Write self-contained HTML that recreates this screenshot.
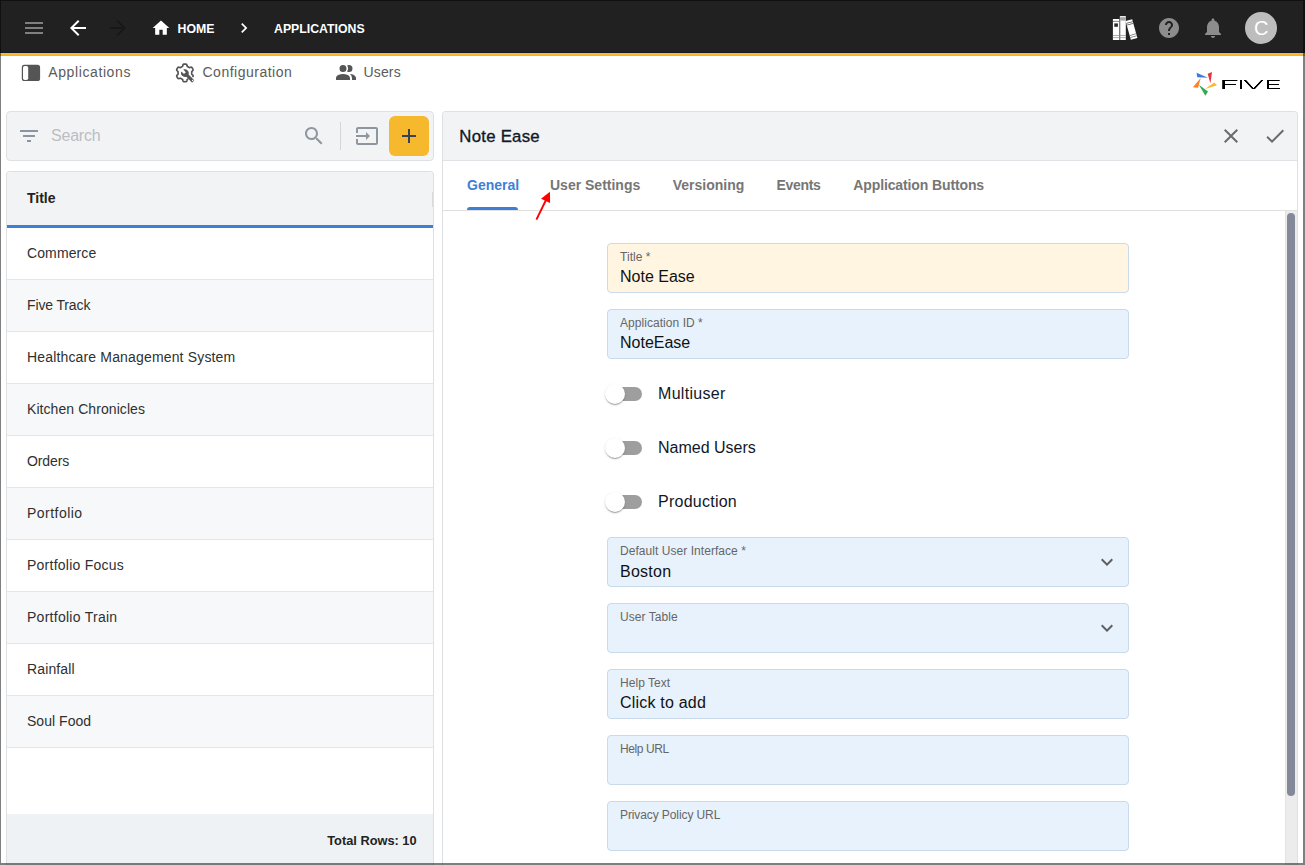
<!DOCTYPE html>
<html lang="en">
<head>
<meta charset="utf-8">
<title>Five - Applications</title>
<style>
html,body{margin:0;padding:0;overflow:hidden;}
body{width:1305px;height:865px;overflow:hidden;background:#fff;position:relative;font-family:"Liberation Sans",sans-serif;color:#111827;}
.abs{position:absolute;}
.t{position:absolute;white-space:nowrap;line-height:1;}
svg{position:absolute;display:block;}
/* top bar */
#topbar{left:0;top:0;width:1305px;height:53px;background:#212121;}
#ybar{left:0;top:52px;width:1305px;height:4px;background:linear-gradient(#131b2a 0,#131b2a 1px,#fcc02e 1px,#f4b123 4px);}
.crumb{color:#fff;font-weight:bold;font-size:12.3px;}
/* nav row */
.nav{color:#5b5b5b;font-size:14px;letter-spacing:.5px;}
/* left panel */
#search{left:6px;top:111px;width:426px;height:48px;border:1px solid #dfe0e2;border-radius:4px;background:#f2f3f5;}
#list{left:6px;top:171px;width:426px;height:693px;border:1px solid #dfe0e2;border-bottom:0;border-radius:4px 4px 0 0;background:#fff;overflow:hidden;}
#lhead{left:0;top:0;width:426px;height:53px;background:#f2f3f5;}
#lblue{left:0;top:53px;width:426px;height:3px;background:#3d7fd6;}
.row{position:absolute;left:0;width:426px;height:51px;border-bottom:1px solid #e4e6e9;background:#fff;}
.row.alt{background:#f7f8fa;}
.row span{position:absolute;left:20px;top:17px;font-size:14px;line-height:16px;color:#303030;white-space:nowrap;letter-spacing:.1px;}
#lfoot{left:0;top:642px;width:426px;height:51px;background:#eff2f4;}
/* right panel */
#panel{left:442px;top:111px;width:854px;height:753px;border:1px solid #dfe0e2;border-bottom:0;border-radius:4px 4px 0 0;background:#fff;overflow:hidden;}
#phead{left:0;top:0;width:854px;height:48px;background:#f2f3f5;border-bottom:1px solid #e0e2e5;}
#tabline{left:0;top:98px;width:854px;height:1px;background:#e0e0e0;}
.tab{font-size:14px;font-weight:bold;color:#767676;}
.field{position:absolute;left:607px;width:520px;height:48px;border:1px solid #c9daeb;border-radius:4px;background:#e8f2fc;}
.field .lb{position:absolute;left:12px;top:6px;font-size:12px;line-height:14px;color:#666;white-space:nowrap;letter-spacing:.05px;}
.field .val{position:absolute;left:12px;top:24px;font-size:16px;line-height:18px;color:#111;white-space:nowrap;}
.sw{position:absolute;left:596px;width:58px;height:38px;}
.sw .trk{position:absolute;left:12px;top:12px;width:34px;height:14px;border-radius:7px;background:#9e9e9e;}
.sw .thm{position:absolute;left:9px;top:9px;width:20px;height:20px;border-radius:50%;background:#fff;box-shadow:0 2px 1px -1px rgba(0,0,0,.2),0 1px 1px 0 rgba(0,0,0,.14),0 1px 3px 0 rgba(0,0,0,.12);}
.swl{font-size:16px;color:#111827;letter-spacing:.2px;}
/* frame */
.fr{position:absolute;background:rgba(0,0,0,.5);z-index:50;}
</style>
</head>
<body>

<!-- TOP BAR -->
<div id="topbar" class="abs"></div>
<div id="ybar" class="abs"></div>

<!-- menu -->
<svg style="left:22px;top:16px" width="24" height="24" viewBox="0 0 24 24"><path fill="#808080" d="M3 18h18v-2H3v2zm0-5h18v-2H3v2zm0-7v2h18V6H3z"/></svg>
<!-- back -->
<svg style="left:66px;top:16px" width="24" height="24" viewBox="0 0 24 24"><path fill="#fff" d="M20 11H7.83l5.59-5.59L12 4l-8 8 8 8 1.41-1.41L7.83 13H20v-2z"/></svg>
<!-- forward (disabled) -->
<svg style="left:106px;top:16px" width="24" height="24" viewBox="0 0 24 24"><path fill="#181818" d="M12 4l-1.41 1.41L16.17 11H4v2h12.17l-5.58 5.59L12 20l8-8z"/></svg>
<!-- home -->
<svg style="left:151px;top:18px" width="20" height="20" viewBox="0 0 24 24"><path fill="#fff" d="M10 20v-6h4v6h5v-8h3L12 3 2 12h3v8z"/></svg>
<span class="t crumb" id="c_home" style="left:177.500px;top:23px">HOME</span>
<svg style="left:234px;top:18px" width="20" height="20" viewBox="0 0 24 24"><path fill="#fff" d="M10 6L8.59 7.41 13.17 12l-4.58 4.59L10 18l6-6z"/></svg>
<span class="t crumb" id="c_apps" style="left:274px;top:23px">APPLICATIONS</span>

<!-- NAV ROW -->
<svg style="left:21px;top:64px" width="20" height="18" viewBox="0 0 20 18"><rect x=".8" y=".8" width="18.3" height="16.2" rx="2.6" fill="#555"/><rect x="2" y="1.9" width="5.2" height="14.2" rx="1.8" fill="#fff"/></svg>
<span class="t nav" id="n_apps" style="left:48.300px;top:65px;letter-spacing:.6px">Applications</span>
<span class="t nav" id="n_conf" style="left:202.500px;top:65px">Configuration</span>
<svg style="left:334px;top:61px" width="24" height="24" viewBox="0 0 24 24"><path fill="#555" d="M16 17V19H2V17S2 13 9 13 16 17 16 17M12.5 7.5A3.5 3.5 0 1 0 9 11A3.5 3.5 0 0 0 12.5 7.5M15.94 13A5.32 5.32 0 0 1 18 17V19H22V17S22 13.37 15.94 13M15 4A3.39 3.39 0 0 0 13.07 4.59A5 5 0 0 1 13.07 10.41A3.39 3.39 0 0 0 15 11A3.5 3.5 0 0 0 15 4Z"/></svg>
<span class="t nav" id="n_users" style="left:363.500px;top:65px;letter-spacing:.15px">Users</span>

<svg id="gear" style="left:170px;top:58px" width="30" height="30" viewBox="0 0 30 30"><path d="M17.69 21.17L17.60 21.23L17.51 21.28L17.42 21.34L17.33 21.41L17.25 21.50L17.17 21.61L17.10 21.76L17.05 21.95L16.99 22.17L16.94 22.43L16.88 22.70L16.81 22.94L16.73 23.14L16.63 23.30L16.52 23.41L16.40 23.50L16.27 23.56L16.14 23.61L16.01 23.65L15.87 23.67L15.74 23.70L15.60 23.71L15.47 23.73L15.33 23.74L15.20 23.74L15.06 23.75L14.92 23.75L14.79 23.75L14.65 23.75L14.51 23.74L14.38 23.73L14.24 23.72L14.11 23.70L13.97 23.68L13.84 23.66L13.71 23.62L13.57 23.58L13.45 23.52L13.32 23.45L13.21 23.34L13.10 23.20L13.01 23.01L12.94 22.78L12.88 22.52L12.82 22.26L12.77 22.02L12.72 21.82L12.65 21.66L12.58 21.54L12.50 21.44L12.41 21.37L12.32 21.30L12.23 21.24L12.14 21.19L12.04 21.14L11.95 21.09L11.86 21.04L11.76 20.99L11.67 20.94L11.58 20.89L11.49 20.84L11.40 20.79L11.31 20.73L11.21 20.68L11.13 20.62L11.04 20.56L10.95 20.51L10.86 20.45L10.76 20.40L10.67 20.35L10.57 20.30L10.47 20.26L10.35 20.23L10.21 20.22L10.05 20.24L9.86 20.28L9.63 20.36L9.38 20.44L9.12 20.52L8.88 20.58L8.66 20.60L8.48 20.59L8.32 20.55L8.19 20.49L8.07 20.41L7.97 20.32L7.87 20.22L7.78 20.12L7.70 20.02L7.61 19.91L7.53 19.80L7.46 19.68L7.38 19.57L7.31 19.45L7.24 19.34L7.17 19.22L7.11 19.10L7.05 18.98L6.99 18.85L6.93 18.73L6.88 18.60L6.83 18.48L6.78 18.35L6.75 18.22L6.72 18.08L6.70 17.94L6.71 17.80L6.75 17.64L6.82 17.48L6.94 17.31L7.11 17.13L7.30 16.95L7.50 16.77L7.68 16.61L7.83 16.46L7.93 16.32L8.00 16.20L8.04 16.08L8.06 15.97L8.07 15.86L8.07 15.75L8.07 15.65L8.07 15.54L8.06 15.43L8.06 15.33L8.06 15.22L8.05 15.12L8.05 15.01L8.05 14.91L8.05 14.80L8.05 14.69L8.05 14.59L8.06 14.48L8.06 14.38L8.07 14.27L8.07 14.17L8.07 14.06L8.07 13.95L8.06 13.84L8.04 13.73L8.00 13.62L7.94 13.49L7.84 13.36L7.70 13.21L7.53 13.05L7.33 12.88L7.13 12.69L6.96 12.51L6.83 12.34L6.75 12.17L6.71 12.02L6.70 11.87L6.72 11.73L6.74 11.60L6.78 11.47L6.82 11.34L6.87 11.21L6.92 11.08L6.98 10.96L7.04 10.84L7.10 10.72L7.17 10.60L7.23 10.48L7.30 10.36L7.38 10.24L7.45 10.13L7.53 10.02L7.60 9.90L7.69 9.80L7.77 9.69L7.86 9.59L7.96 9.49L8.06 9.40L8.18 9.32L8.31 9.25L8.46 9.21L8.64 9.19L8.85 9.21L9.09 9.27L9.35 9.35L9.60 9.44L9.83 9.51L10.03 9.56L10.19 9.57L10.33 9.57L10.45 9.54L10.56 9.51L10.66 9.46L10.75 9.41L10.85 9.35L10.94 9.30L11.03 9.24L11.12 9.19L11.20 9.13L11.29 9.07L11.39 9.02L11.48 8.97L11.57 8.91L11.66 8.86L11.75 8.81L11.85 8.76L11.94 8.71L12.03 8.66L12.13 8.61L12.22 8.56L12.31 8.51L12.40 8.44L12.49 8.37L12.57 8.28L12.64 8.16L12.71 8.00L12.77 7.81L12.82 7.57L12.87 7.31L12.93 7.05L13.00 6.81L13.09 6.62L13.20 6.47L13.31 6.36L13.43 6.28L13.56 6.22L13.69 6.18L13.82 6.15L13.96 6.12L14.09 6.10L14.23 6.08L14.36 6.07L14.50 6.06L14.63 6.05L14.77 6.05L14.91 6.05L15.04 6.05L15.18 6.06L15.32 6.06L15.45 6.07L15.59 6.09L15.72 6.10L15.86 6.12L15.99 6.15L16.12 6.19L16.25 6.23L16.38 6.29L16.50 6.37L16.62 6.49L16.72 6.64L16.81 6.84L16.88 7.08L16.94 7.34L16.99 7.60L17.04 7.83L17.10 8.02L17.16 8.17L17.24 8.29L17.32 8.38L17.41 8.45L17.50 8.51L17.59 8.57L17.68 8.62L17.78 8.67L17.87 8.72L17.96 8.77L18.06 8.82L18.15 8.87L18.24 8.92L18.33 8.97L18.42 9.03L18.52 9.08L18.61 9.14L18.70 9.19L18.78 9.25L18.87 9.30L18.96 9.36L19.06 9.41L19.15 9.47L19.25 9.51L19.36 9.55L19.48 9.57L19.62 9.57L19.79 9.55L19.99 9.50L20.23 9.43L20.48 9.34L20.74 9.26L20.97 9.21L21.18 9.19L21.36 9.21L21.51 9.26L21.64 9.33L21.75 9.41L21.85 9.50L21.95 9.60L22.04 9.70L22.12 9.81L22.20 9.92L22.28 10.03L22.36 10.14L22.43 10.26L22.50 10.37L22.57 10.49L22.64 10.61L22.70 10.73L22.77 10.85L22.83 10.97L22.88 11.10L22.94 11.22L22.98 11.35L23.03 11.48L23.06 11.61L23.09 11.75L23.10 11.89L23.08 12.04L23.04 12.19L22.95 12.36L22.82 12.53L22.65 12.71L22.45 12.90L22.25 13.07L22.08 13.23L21.95 13.37L21.85 13.51L21.79 13.63L21.76 13.74L21.74 13.86L21.73 13.96L21.73 14.07L21.73 14.18L21.73 14.28L21.74 14.39L21.74 14.50L21.75 14.60L21.75 14.71L21.75 14.81L21.75 14.92L21.75 15.02L21.75 15.13L21.74 15.23L21.74 15.34L21.74 15.45L21.73 15.55L21.73 15.66L21.73 15.76L21.73 15.87L21.74 15.98L21.77 16.09L21.81 16.21L21.88 16.34L21.99 16.47L22.13 16.62L22.32 16.79L22.52 16.97L22.71 17.15L22.87 17.33L22.99 17.50L23.06 17.66L23.09 17.81L23.09 17.96L23.08 18.10L23.05 18.23L23.01 18.36L22.97 18.49" fill="none" stroke="#555" stroke-width="1.700" stroke-linecap="round" stroke-linejoin="round"/><g transform="translate(10.400,10.600) scale(0.600)"><path fill="#555" d="M22.700,19L13.600,9.900C14.500,7.600 14,4.900 12.100,3C10.100,1 7.100,0.600 4.700,1.700L9,6L6,9L1.600,4.700C0.400,7.100 0.900,10.100 2.900,12.100C4.800,14 7.500,14.500 9.800,13.600L18.900,22.700C19.300,23.100 19.900,23.100 20.300,22.700L22.600,20.400C23.100,20 23.100,19.300 22.700,19Z"/></g><circle cx="22.600" cy="22.600" r=".75" fill="#fff"/></svg>
<!-- books -->
<svg id="books" style="left:1110px;top:13px" width="30" height="30" viewBox="1110 13 30 30">
  <rect x="1112.900" y="19" width="6.400" height="21" fill="#fff"/>
  <rect x="1112.900" y="20.900" width="6.400" height=".7" fill="#555"/>
  <rect x="1114.300" y="23.400" width="3.600" height="3.400" fill="#2a2a2a"/>
  <rect x="1112.900" y="35.200" width="6.400" height=".8" fill="#999"/>
  <rect x="1112.900" y="37.300" width="6.400" height=".8" fill="#999"/>
  <rect x="1119.900" y="16.100" width="5.900" height="23.900" fill="#fff"/>
  <rect x="1119.900" y="17.200" width="5.900" height="3.400" fill="#a6a6a6"/>
  <rect x="1119.900" y="20.600" width=".8" height="19.400" fill="#bbb"/>
  <rect x="1119.900" y="35.200" width="5.900" height=".8" fill="#999"/>
  <rect x="1119.900" y="37.300" width="5.900" height=".8" fill="#999"/>
  <g transform="rotate(-15.500 1131.500 29.500)">
    <rect x="1128.100" y="19.700" width="6.800" height="19.600" fill="#fff"/>
    <rect x="1128.100" y="21.900" width="6.800" height=".8" fill="#555"/>
    <rect x="1128.100" y="23.700" width="6.800" height=".8" fill="#555"/>
    <rect x="1128.100" y="34.400" width="6.800" height=".8" fill="#777"/>
    <rect x="1128.100" y="36.500" width="6.800" height=".8" fill="#777"/>
  </g>
</svg>
<!-- help -->
<svg style="left:1157px;top:16px" width="24" height="24" viewBox="0 0 24 24"><path fill="#8c8c8c" d="M12 2C6.480 2 2 6.480 2 12s4.480 10 10 10 10-4.480 10-10S17.520 2 12 2zm1 17h-2v-2h2v2zm2.070-7.750l-.9.920C13.450 12.900 13 13.500 13 15h-2v-.5c0-1.100.45-2.100 1.170-2.830l1.240-1.260c.37-.36.590-.86.590-1.410 0-1.100-.9-2-2-2s-2 .9-2 2H8c0-2.210 1.790-4 4-4s4 1.790 4 4c0 .88-.36 1.680-.93 2.250z"/></svg>
<!-- bell -->
<svg style="left:1201px;top:16px" width="24" height="24" viewBox="0 0 24 24"><path fill="#8c8c8c" d="M12 22c1.100 0 2-.9 2-2h-4c0 1.100.89 2 2 2zm6-6v-5c0-3.070-1.640-5.640-4.500-6.320V4c0-.83-.67-1.500-1.500-1.500s-1.500.67-1.500 1.500v.68C7.630 5.360 6 7.920 6 11v5l-2 2v1h16v-1l-2-2z"/></svg>
<!-- avatar -->
<div class="abs" style="left:1245px;top:12px;width:32px;height:32px;border-radius:50%;background:#bdbdbd"></div>
<span class="t" id="av" style="left:1254px;top:18px;font-size:20px;color:#fff">C</span>

<!-- logo -->
<svg id="logo" style="left:1185px;top:62px" width="110" height="44" viewBox="1185 62 110 44">
  <defs><filter id="vthick" x="-5%" y="-30%" width="110%" height="160%"><feGaussianBlur stdDeviation="0.15 0.6"/><feComponentTransfer><feFuncA type="linear" slope="3.5"/></feComponentTransfer></filter></defs>
  <polygon points="1196.600,72.800 1207.900,77.700 1197.200,77.300" fill="#3b7ddd"/>
  <polygon points="1212,71.900 1210.400,83.600 1207.700,73.800" fill="#e5343d"/>
  <polygon points="1214.200,82.600 1217.100,85.300 1205.100,89.100" fill="#fbb829"/>
  <polygon points="1198.800,84.700 1208,91.500 1205.400,95.700" fill="#34a853"/>
  <polygon points="1200.700,77.900 1198.100,87.800 1192.900,87.300" fill="#ff7f27"/>
  <text id="fivetxt" y="88.900" filter="url(#vthick)" font-family="DejaVu Sans, Liberation Sans, sans-serif" font-weight="200" font-size="12.400" fill="#000"><tspan x="1218" textLength="22.500" lengthAdjust="spacingAndGlyphs">F</tspan><tspan x="1237.900" textLength="5.800" lengthAdjust="spacingAndGlyphs">I</tspan><tspan x="1243" textLength="21.200" lengthAdjust="spacingAndGlyphs">V</tspan><tspan x="1263.800" textLength="18.600" lengthAdjust="spacingAndGlyphs">E</tspan></text>
</svg>

<!-- LEFT PANEL -->
<div id="search" class="abs">
  <svg style="left:10px;top:12px" width="24" height="24" viewBox="0 0 24 24"><path fill="#8a97a3" d="M10 18h4v-2h-4v2zM3 6v2h18V6H3zm3 7h12v-2H6v2z"/></svg>
  <span class="t" id="s_ph" style="left:44px;top:16px;font-size:16px;color:#bbbec2;letter-spacing:-.2px">Search</span>
  <svg style="left:295px;top:12px" width="24" height="24" viewBox="0 0 24 24"><path fill="#8e979f" d="M15.5 14h-.79l-.28-.27C15.41 12.59 16 11.11 16 9.500 16 5.910 13.090 3 9.500 3S3 5.910 3 9.500 5.910 16 9.500 16c1.610 0 3.090-.59 4.230-1.570l.27.280v.79l5 4.990L20.490 19l-4.990-5zm-6 0C7.010 14 5 11.990 5 9.500S7.010 5 9.500 5 14 7.010 14 9.500 11.990 14 9.500 14z"/></svg>
  <div class="abs" style="left:333px;top:10px;width:1px;height:28px;background:#d4d7da"></div>
  <svg style="left:348px;top:12px" width="24" height="24" viewBox="0 0 24 24"><path fill="#8e979f" d="M21 3.010H3c-1.100 0-2 .9-2 2V9h2V4.990h18v14.030H3V15H1v4.010c0 1.100.9 1.980 2 1.980h18c1.100 0 2-.88 2-1.980v-14c0-1.110-.9-2-2-2zM11 16l4-4-4-4v3H1v2h10v3z"/></svg>
  <div class="abs" style="left:382px;top:4px;width:40px;height:40px;border-radius:6px;background:#f6b82c"></div>
  <svg style="left:390px;top:12px" width="24" height="24" viewBox="0 0 24 24"><path fill="#3b4252" d="M19 13h-6v6h-2v-6H5v-2h6V5h2v6h6v2z"/></svg>
</div>
<div id="list" class="abs">
  <div id="lhead" class="abs"></div>
  <span class="t" id="l_title" style="left:20px;top:19px;font-size:14px;font-weight:bold;color:#222">Title</span>
  <div class="abs" style="left:425px;top:20px;width:1px;height:15px;background:#dadada"></div>
  <div id="lblue" class="abs"></div>
  <div class="row" style="top:56px"><span style="letter-spacing:0.11px">Commerce</span></div>
  <div class="row alt" style="top:108px"><span style="letter-spacing:-0.13px">Five Track</span></div>
  <div class="row" style="top:160px"><span style="letter-spacing:0.16px">Healthcare Management System</span></div>
  <div class="row alt" style="top:212px"><span style="letter-spacing:0.07px">Kitchen Chronicles</span></div>
  <div class="row" style="top:264px"><span style="letter-spacing:-0.10px">Orders</span></div>
  <div class="row alt" style="top:316px"><span style="letter-spacing:0.47px">Portfolio</span></div>
  <div class="row" style="top:368px"><span style="letter-spacing:0.25px">Portfolio Focus</span></div>
  <div class="row alt" style="top:420px"><span style="letter-spacing:0.27px">Portfolio Train</span></div>
  <div class="row" style="top:472px"><span style="letter-spacing:0.13px">Rainfall</span></div>
  <div class="row alt" style="top:524px"><span style="letter-spacing:0.03px">Soul Food</span></div>
  <div id="lfoot" class="abs"></div>
  <span class="t" id="l_total" style="right:16.400px;top:662.700px;font-size:12.800px;font-weight:bold;color:#222">Total Rows: 10</span>
</div>

<!-- RIGHT PANEL -->
<div id="panel" class="abs">
  <div id="phead" class="abs"></div>
  <span class="t" id="p_title" style="left:16.300px;top:17px;font-size:16.800px;letter-spacing:.25px;color:#111827;-webkit-text-stroke:.35px #111827">Note Ease</span>
  <svg style="left:776px;top:12px" width="24" height="24" viewBox="0 0 24 24"><path fill="#6b6b6b" d="M19 6.410L17.590 5 12 10.590 6.410 5 5 6.410 10.590 12 5 17.590 6.410 19 12 13.410 17.590 19 19 17.590 13.410 12z"/></svg>
  <svg style="left:820px;top:12px" width="24" height="24" viewBox="0 0 24 24"><path fill="#6b6b6b" d="M9 16.170L4.830 12l-1.420 1.410L9 19 21 7l-1.410-1.410z"/></svg>
  <span class="t tab" id="t_gen" style="left:24px;top:66px;color:#3d7fd6">General</span>
  <span class="t tab" id="t_us" style="left:107px;top:66px">User Settings</span>
  <span class="t tab" id="t_ver" style="left:229.700px;top:66px">Versioning</span>
  <span class="t tab" id="t_ev" style="left:333.500px;top:66px;letter-spacing:-.3px">Events</span>
  <span class="t tab" id="t_ab" style="left:410.300px;top:66px;letter-spacing:-.12px">Application Buttons</span>
  <div class="abs" style="left:24px;top:95px;width:51px;height:3px;background:#3d7fd6;border-radius:3px 3px 0 0"></div>
  <div id="tabline" class="abs"></div>
  <!-- scrollbar -->
  <div class="abs" style="left:842px;top:99px;width:12px;height:700px;background:#ececec;border-left:1px solid #e3e3e3;box-sizing:border-box"></div>
  <div class="abs" style="left:844px;top:101px;width:8px;height:583px;border-radius:4px;background:#838999"></div>
</div>
<!-- red arrow -->
<svg style="left:525px;top:185px" width="40" height="40" viewBox="525 185 40 40"><line x1="536.400" y1="219.600" x2="546" y2="200" stroke="#ff0000" stroke-width="1.900"/><polygon points="549.900,191.800 541,198.700 550.100,203.100" fill="#ff0000"/></svg>

<!-- FORM -->
<div class="field" style="top:243px;background:#fff5e1"><span class="lb">Title *</span><span class="val" id="v_title">Note Ease</span></div>
<div class="field" style="top:309px"><span class="lb">Application ID *</span><span class="val">NoteEase</span></div>
<div class="sw" style="top:375px"><div class="trk"></div><div class="thm"></div></div>
<span class="t swl" id="sw1" style="left:658px;top:386px;letter-spacing:.3px">Multiuser</span>
<div class="sw" style="top:429px"><div class="trk"></div><div class="thm"></div></div>
<span class="t swl" id="sw2" style="left:658px;top:440px;letter-spacing:0">Named Users</span>
<div class="sw" style="top:483px"><div class="trk"></div><div class="thm"></div></div>
<span class="t swl" id="sw3" style="left:658px;top:494px;letter-spacing:.25px">Production</span>
<div class="field" style="top:537px"><span class="lb" id="lb_dui">Default User Interface *</span><span class="val" style="top:25px;letter-spacing:.25px">Boston</span>
  <svg style="left:487px;top:12px" width="24" height="24" viewBox="0 0 24 24"><path fill="#5f5f5f" d="M16.590 8.590L12 13.170 7.410 8.590 6 10l6 6 6-6z"/></svg></div>
<div class="field" style="top:603px"><span class="lb">User Table</span>
  <svg style="left:487px;top:12px" width="24" height="24" viewBox="0 0 24 24"><path fill="#5f5f5f" d="M16.590 8.590L12 13.170 7.410 8.590 6 10l6 6 6-6z"/></svg></div>
<div class="field" style="top:669px"><span class="lb">Help Text</span><span class="val" style="letter-spacing:.2px">Click to add</span></div>
<div class="field" style="top:735px"><span class="lb" style="letter-spacing:-.4px">Help URL</span></div>
<div class="field" style="top:801px"><span class="lb" style="letter-spacing:-.1px">Privacy Policy URL</span></div>

<!-- FRAME -->
<div class="fr" style="left:0;top:0;width:1305px;height:1px"></div>
<div class="fr" style="left:0;top:1px;width:1px;height:862px"></div>
<div class="fr" style="left:1303px;top:1px;width:2px;height:862px"></div>
<div class="fr" style="left:0;top:863px;width:1305px;height:2px"></div>
</body>
</html>
